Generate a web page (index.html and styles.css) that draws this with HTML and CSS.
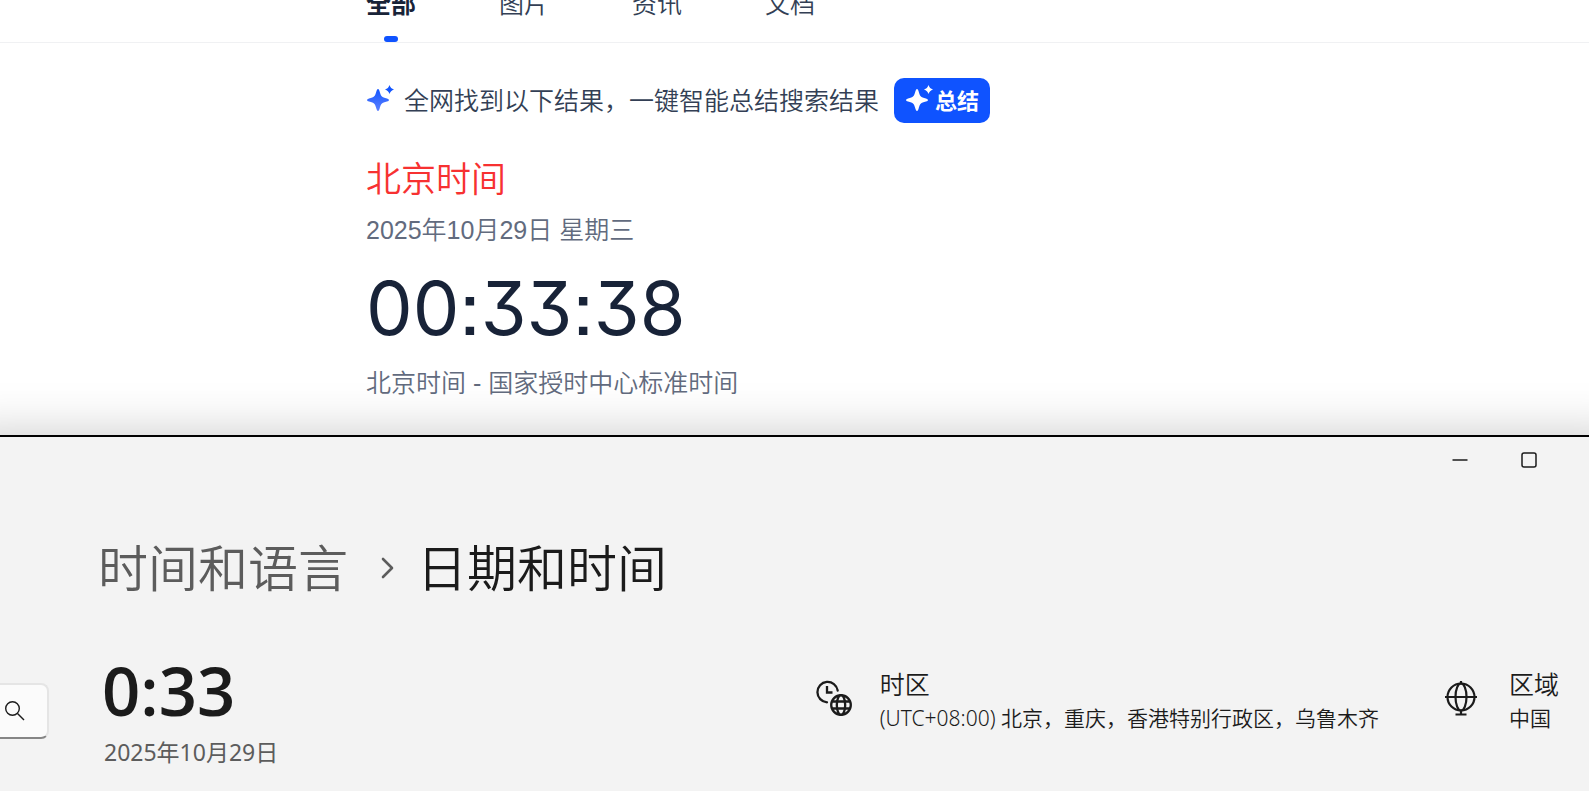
FILE: index.html
```html
<!DOCTYPE html>
<html lang="zh-CN">
<head>
    <meta charset="UTF-8">
    <meta name="viewport" content="width=device-width, initial-scale=1.0">
    <title>北京时间</title>
    <link rel="stylesheet" href="styles.css">
</head>
<body>
    <div class="browser">
        <nav class="tabs">
            <a class="tab active" href="#all">全部</a>
            <a class="tab" href="#images">图片</a>
            <a class="tab" href="#news">资讯</a>
            <a class="tab" href="#docs">文档</a>
        </nav>

        <main class="results">
            <div class="summary">
                <svg class="spark" width="28" height="32" viewBox="0 0 28 32">
                    <defs>
                        <linearGradient id="spark-fill" x1="0" y1="0" x2="0" y2="1">
                            <stop offset="0" stop-color="#1456ff"/>
                            <stop offset="1" stop-color="#5c80ff"/>
                        </linearGradient>
                    </defs>
                    <path fill="url(#spark-fill)" d="M12 4 Q13 4 13.500 6 C15 11.500 15.500 12 21 13.500 Q23 14 23 15 Q23 16 21 16.500 C15.500 18 15 18.500 13.500 24 Q13 26 12 26 Q11 26 10.500 24 C9 18.500 8.500 18 3 16.500 Q1 16 1 15 Q1 14 3 13.500 C8.500 12 9 11.500 10.500 6 Q11 4 12 4Z"/>
                    <path fill="#1456ff" d="M23.500 0 Q24.500 3.500 28 4.500 Q24.500 5.500 23.500 9 Q22.500 5.500 19 4.500 Q22.500 3.500 23.500 0Z"/>
                </svg>
                <span class="summary-text">全网找到以下结果，一键智能总结搜索结果</span>
                <button class="summary-btn" type="button">
                    <svg width="28" height="32" viewBox="0 0 28 32" fill="#fff">
                        <path d="M12 4 Q13 4 13.500 6 C15 11.500 15.500 12 21 13.500 Q23 14 23 15 Q23 16 21 16.500 C15.500 18 15 18.500 13.500 24 Q13 26 12 26 Q11 26 10.500 24 C9 18.500 8.500 18 3 16.500 Q1 16 1 15 Q1 14 3 13.500 C8.500 12 9 11.500 10.500 6 Q11 4 12 4Z"/>
                        <path d="M23.500 0 Q24.500 3.500 28 4.500 Q24.500 5.500 23.500 9 Q22.500 5.500 19 4.500 Q22.500 3.500 23.500 0Z"/>
                    </svg>
                    <span>总结</span>
                </button>
            </div>

            <h1 class="result-title">北京时间</h1>
            <p class="result-date">2025年10月29日 星期三</p>
            <div class="result-clock">00:33:38</div>
            <p class="result-source">北京时间 - 国家授时中心标准时间</p>
        </main>
    </div>

    <div class="window">
        <div class="titlebar">
            <button type="button" aria-label="最小化">
                <svg width="16" height="16" viewBox="0 0 16 16"><path d="M0.500 8H15.500" stroke="#1b1b1b" stroke-width="1.500"/></svg>
            </button>
            <button type="button" aria-label="最大化">
                <svg width="16" height="16" viewBox="0 0 16 16"><rect x="1" y="1" width="14" height="14" rx="2" fill="none" stroke="#1b1b1b" stroke-width="1.500"/></svg>
            </button>
        </div>

        <div class="settings">
            <form class="search">
                <input type="search" aria-label="查找设置">
                <button type="button" aria-label="搜索">
                    <svg width="20" height="20" viewBox="0 0 20 20" fill="none" stroke="#1b1b1b" stroke-width="1.400">
                        <circle cx="7.500" cy="7.500" r="6.800"/>
                        <path d="M12.500 12.500L19 19"/>
                    </svg>
                </button>
            </form>

            <div class="content">
                <h2 class="breadcrumb">
                    <a href="#language">时间和语言</a>
                    <svg width="14" height="24" viewBox="0 0 14 24"><path d="M2 3L11 12L2 21" fill="none" stroke="#5c5c5c" stroke-width="2.600" stroke-linecap="round" stroke-linejoin="round"/></svg>
                    <span>日期和时间</span>
                </h2>

                <div class="overview">
                    <div class="now">
                        <div class="now-time">0:33</div>
                        <div class="now-date">2025年10月29日</div>
                    </div>

                    <div class="info">
                        <svg width="36" height="36" viewBox="0 0 36 36" fill="none" stroke="#1b1b1b" stroke-width="2.300">
                            <path d="M11 22.300A10.200 10.200 0 1 1 21.700 10.500" stroke-linecap="round"/>
                            <path d="M11 6V12.500H16.500"/>
                            <circle cx="25" cy="25" r="9.800"/>
                            <ellipse cx="25" cy="25" rx="4.200" ry="9.800"/>
                            <path d="M16 21.500H34M16 28.500H34"/>
                        </svg>
                        <div>
                            <div class="info-title">时区</div>
                            <div class="info-value">(UTC+08:00) 北京，重庆，香港特别行政区，乌鲁木齐</div>
                        </div>
                    </div>

                    <div class="info">
                        <svg width="36" height="36" viewBox="0 0 36 36" fill="none" stroke="#1b1b1b" stroke-width="2.200">
                            <circle cx="16" cy="17" r="13.500"/>
                            <ellipse cx="16" cy="17" rx="5.500" ry="13.500"/>
                            <path d="M0 17H32M16 1V4M16 30V35M10.500 34.500H21.500"/>
                        </svg>
                        <div>
                            <div class="info-title">区域</div>
                            <div class="info-value">中国</div>
                        </div>
                    </div>
                </div>
            </div>
        </div>
    </div>
</body>
</html>
```
FILE: styles.css
```css
* {
    box-sizing: border-box;
}

body {
    margin: 0;
    min-height: 100vh;
    display: flex;
    flex-direction: column;
    overflow: hidden;
    background-color: #fff;
    font-family: "Liberation Sans", "Noto Sans CJK SC", sans-serif;
    color: #182338;
}

h1, h2, p {
    margin: 0;
    font-weight: 350;
}

a {
    color: inherit;
    text-decoration: none;
}

button {
    border: none;
    padding: 0;
    background: none;
    color: inherit;
    font-family: inherit;
}

svg {
    display: block;
    flex: none;
}

/* Search results page */
.browser {
    height: 435px;
}

.tabs {
    display: flex;
    gap: 83px;
    margin-top: -14px;
    padding-left: 366px;
    border-bottom: 1px solid #f0f1f3;
}

.tab {
    position: relative;
    height: 56px;
    font-size: 25px;
    line-height: 36px;
    font-weight: 350;
    color: #333f55;
}

.tab.active {
    font-weight: 700;
    color: #182338;
}

.tab.active::after {
    content: "";
    position: absolute;
    left: 50%;
    bottom: 0;
    width: 14px;
    height: 6px;
    border-radius: 3px;
    transform: translateX(-50%);
    background-color: #0f53ff;
}

.results {
    padding: 35px 0 0 366px;
}

.summary {
    display: flex;
    align-items: center;
    margin-bottom: 33px;
}

.spark {
    margin-right: 10px;
}

.summary-text {
    margin-right: 15px;
    font-size: 25px;
    font-weight: 350;
    line-height: 36px;
    color: #333f55;
}

.summary-btn {
    display: flex;
    align-items: center;
    gap: 2px;
    height: 45px;
    padding: 0 11px;
    border-radius: 10px;
    background-color: #0f53ff;
    color: #fff;
    font-size: 22px;
    font-weight: 700;
}

.summary-btn span {
    padding-bottom: 4px;
}

.result-title {
    font-size: 35px;
    line-height: 48px;
    color: #f73131;
}

.result-date,
.result-source {
    font-size: 25px;
    line-height: 36px;
    color: #626b7e;
}

.result-date {
    margin-top: 8px;
}

.result-clock {
    margin: 16px 0 13px;
    font-family: Inter, "Liberation Sans", sans-serif;
    font-size: 74px;
    line-height: 88px;
    font-feature-settings: "cv09", "ss07", "calt" 0;
}

/* Settings window */
.window {
    position: relative;
    flex: 1;
    border-top: 2px solid #000;
    background-color: #f3f3f3;
    box-shadow: 0 40px 48px 40px rgba(0, 0, 0, 0.22);
    font-family: "Noto Sans", "Noto Sans CJK SC", sans-serif;
    color: #1b1b1b;
}

.titlebar {
    display: flex;
    justify-content: flex-end;
    padding-right: 26px;
}

.titlebar button {
    display: flex;
    align-items: center;
    justify-content: center;
    width: 69px;
    height: 45px;
}

.settings {
    display: flex;
}

.search {
    position: relative;
    width: 49px;
    margin: 201px 49px 0 0;
}

.search input {
    display: block;
    width: 100%;
    height: 56px;
    border: 2px solid #e5e5e5;
    border-left: none;
    border-bottom-color: #868686;
    border-radius: 0 8px 8px 0;
    background-color: #fbfbfb;
}

.search button {
    position: absolute;
    top: 18px;
    left: 5px;
}

.content {
    flex: 1;
    padding: 46px 30px 0 0;
}

.breadcrumb {
    display: flex;
    align-items: center;
    font-size: 50px;
    line-height: 80px;
}

.breadcrumb a {
    color: #5c5c5c;
}

.breadcrumb svg {
    margin: 0 22px 0 33px;
}

.overview {
    display: grid;
    grid-template-columns: 1fr auto auto;
    column-gap: 66px;
    margin-top: 44px;
}

.now {
    padding: 2px 0 0 4px;
}

.now-time {
    font-family: "Open Sans", "Noto Sans", sans-serif;
    font-size: 67px;
    font-weight: 600;
    line-height: 72px;
}

.now-date {
    font-size: 23px;
    line-height: 36px;
    margin-top: 8px;
    padding-left: 2px;
    color: #5c5c5c;
}

.info {
    display: flex;
    gap: 28px;
    padding-top: 14px;
    font-weight: 350;
}

.info > svg {
    margin-top: 14px;
}

.info-title {
    font-size: 25px;
    line-height: 36px;
}

.info-value {
    font-size: 21px;
    line-height: 32px;
    white-space: nowrap;
}
```
